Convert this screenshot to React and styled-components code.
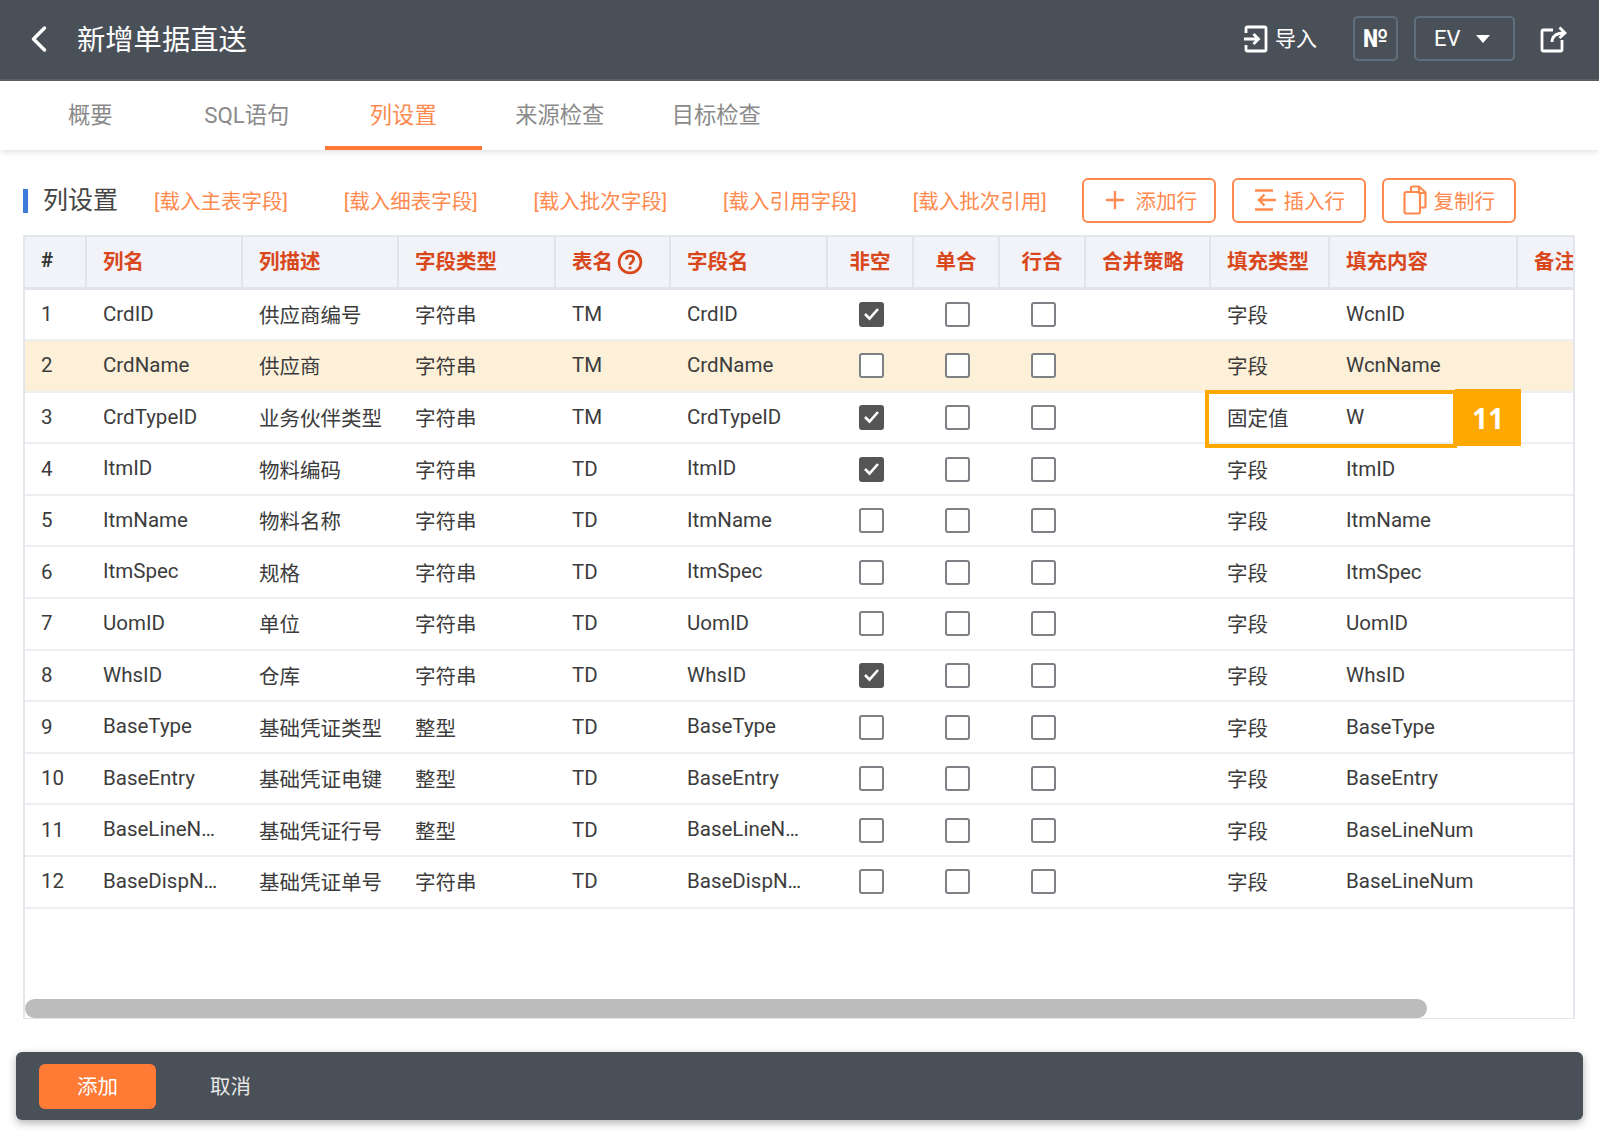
import styled, { createGlobalStyle } from 'styled-components'
import { ChevronLeft, Plus } from 'lucide-react'

const COLS = '62px 156px 156px 157px 115px 157px 86px 86px 86px 125px 119px 188px 120px'

const rows = [
  { id: 'CrdID', desc: '供应商编号', type: '字符串', table: 'TM', field: 'CrdID', notNull: true, fill: '字段', content: 'WcnID' },
  { id: 'CrdName', desc: '供应商', type: '字符串', table: 'TM', field: 'CrdName', fill: '字段', content: 'WcnName', active: true },
  { id: 'CrdTypeID', desc: '业务伙伴类型', type: '字符串', table: 'TM', field: 'CrdTypeID', notNull: true, fill: '固定值', content: 'W' },
  { id: 'ItmID', desc: '物料编码', type: '字符串', table: 'TD', field: 'ItmID', notNull: true, fill: '字段', content: 'ItmID' },
  { id: 'ItmName', desc: '物料名称', type: '字符串', table: 'TD', field: 'ItmName', fill: '字段', content: 'ItmName' },
  { id: 'ItmSpec', desc: '规格', type: '字符串', table: 'TD', field: 'ItmSpec', fill: '字段', content: 'ItmSpec' },
  { id: 'UomID', desc: '单位', type: '字符串', table: 'TD', field: 'UomID', fill: '字段', content: 'UomID' },
  { id: 'WhsID', desc: '仓库', type: '字符串', table: 'TD', field: 'WhsID', notNull: true, fill: '字段', content: 'WhsID' },
  { id: 'BaseType', desc: '基础凭证类型', type: '整型', table: 'TD', field: 'BaseType', fill: '字段', content: 'BaseType' },
  { id: 'BaseEntry', desc: '基础凭证电键', type: '整型', table: 'TD', field: 'BaseEntry', fill: '字段', content: 'BaseEntry' },
  { id: 'BaseLineNum', desc: '基础凭证行号', type: '整型', table: 'TD', field: 'BaseLineNum', fill: '字段', content: 'BaseLineNum' },
  { id: 'BaseDispNum', desc: '基础凭证单号', type: '字符串', table: 'TD', field: 'BaseDispNum', fill: '字段', content: 'BaseLineNum' },
]

const tabs = ['概要', 'SQL语句', '列设置', '来源检查', '目标检查']
const loaders = ['[载入主表字段]', '[载入细表字段]', '[载入批次字段]', '[载入引用字段]', '[载入批次引用]']

function ImportIcon() {
  return (
    <svg width="25" height="28" viewBox="0 0 25 28" fill="none" stroke="#fff" strokeWidth="2.8">
      <path d="M3 8V3.5A1.5 1.5 0 0 1 4.5 2h17A1.5 1.5 0 0 1 23 3.5v21a1.5 1.5 0 0 1-1.5 1.5h-17A1.5 1.5 0 0 1 3 24.5V20" />
      <path d="M1 14h14M10.5 9l5 5-5 5" />
    </svg>
  )
}

function ExportIcon() {
  return (
    <svg width="27" height="28" viewBox="0 0 27 28" fill="none" stroke="#fff" strokeWidth="2.8">
      <path d="M13 5H3.5A1.5 1.5 0 0 0 2 6.5v18A1.5 1.5 0 0 0 3.5 26h17a1.5 1.5 0 0 0 1.5-1.5V15" />
      <path d="M12 17c0-6 4-9 12-9M19.5 2.5 25 8l-5.5 5" />
    </svg>
  )
}

function InsertIcon() {
  return (
    <svg width="24" height="24" viewBox="0 0 24 24" fill="none" stroke="#ff8a50" strokeWidth="2.4">
      <path d="M2 2.5h18M2 21.5h18M23 12H6M11.5 6.5 6 12l5.5 5.5" />
    </svg>
  )
}

function CopyIcon() {
  return (
    <svg width="24" height="30" viewBox="0 0 24 30" fill="none" stroke="#ff8a50" strokeWidth="2.2">
      <path d="M8 6V3a1.5 1.5 0 0 1 1.5-1.5H16l6.5 6V21a1.5 1.5 0 0 1-1.5 1.5h-4" />
      <rect x="1.5" y="7" width="15.5" height="21.5" rx="2" />
      <path d="M16 1.5V8h6.5" />
    </svg>
  )
}

function HelpIcon() {
  return (
    <HelpMark width="26" height="26" viewBox="0 0 25 25" fill="none" stroke="#d9481c" strokeWidth="2.6">
      <circle cx="12.5" cy="12.5" r="10.5" />
      <path d="M9 10c0-2.2 1.5-3.5 3.5-3.5S16 7.8 16 9.8c0 2.7-3.5 2.9-3.5 5.7" />
      <path d="M12.5 17v2.5" />
    </HelpMark>
  )
}

function Tick() {
  return (
    <svg width="17" height="14" viewBox="0 0 17 14" fill="none" stroke="#fff" strokeWidth="2.6">
      <path d="M2 7l4.5 4.5L15 2" />
    </svg>
  )
}

export default function App() {
  return (
    <Page>
      <GlobalStyle />
      <TopBar>
        <BackButton><ChevronLeft size={44} strokeWidth={1.9} /></BackButton>
        <PageTitle>新增单据直送</PageTitle>
        <TopActions>
          <ImportAction><ImportIcon /><ImportLabel>导入</ImportLabel></ImportAction>
          <NumberBox>№</NumberBox>
          <LangBox>EV<Caret /></LangBox>
          <ExportAction><ExportIcon /></ExportAction>
        </TopActions>
      </TopBar>

      <Tabs>
        {tabs.map((tab) => (
          <Tab key={tab} $active={tab === '列设置'}>{tab}</Tab>
        ))}
      </Tabs>

      <Section>
        <Toolbar>
          <SectionTitle>列设置</SectionTitle>
          <Loaders>
            {loaders.map((item) => <LoadLink key={item}>{item}</LoadLink>)}
          </Loaders>
          <OutlineButton><Plus size={28} strokeWidth={2} />添加行</OutlineButton>
          <OutlineButton><InsertIcon />插入行</OutlineButton>
          <OutlineButton><CopyIcon />复制行</OutlineButton>
        </Toolbar>

        <TableWrap>
          <HeadRow>
            <HeadCell $dark>#</HeadCell>
            <HeadCell>列名</HeadCell>
            <HeadCell>列描述</HeadCell>
            <HeadCell>字段类型</HeadCell>
            <HeadCell>表名<HelpIcon /></HeadCell>
            <HeadCell>字段名</HeadCell>
            <HeadCell $center>非空</HeadCell>
            <HeadCell $center>单合</HeadCell>
            <HeadCell $center>行合</HeadCell>
            <HeadCell>合并策略</HeadCell>
            <HeadCell>填充类型</HeadCell>
            <HeadCell>填充内容</HeadCell>
            <HeadCell>备注</HeadCell>
          </HeadRow>

          <Body>
            {rows.map((row, i) => (
              <Row key={row.id} $active={row.active}>
                <Cell>{i + 1}</Cell>
                <Cell $clip>{row.id}</Cell>
                <Cell>{row.desc}</Cell>
                <Cell>{row.type}</Cell>
                <Cell>{row.table}</Cell>
                <Cell $clip>{row.field}</Cell>
                <CheckCell><Check $on={row.notNull}>{row.notNull && <Tick />}</Check></CheckCell>
                <CheckCell><Check /></CheckCell>
                <CheckCell><Check /></CheckCell>
                <Cell />
                <Cell>{row.fill}</Cell>
                <Cell>{row.content}</Cell>
                <Cell />
              </Row>
            ))}
          </Body>

          <ScrollTrack><ScrollThumb /></ScrollTrack>

          <Callout>
            <CalloutBadge>11</CalloutBadge>
          </Callout>
        </TableWrap>
      </Section>

      <Footer>
        <PrimaryButton>添加</PrimaryButton>
        <CancelButton>取消</CancelButton>
      </Footer>
    </Page>
  )
}

const GlobalStyle = createGlobalStyle`
  html, body {
    margin: 0;
    background: #fff;
  }
  * {
    box-sizing: border-box;
  }
`

const Page = styled.div`
  width: 1599px;
  height: 1136px;
  overflow: hidden;
  display: flex;
  flex-direction: column;
  font-family: Roboto, "Noto Sans CJK SC", sans-serif;
  font-size: 20.5px;
  color: #333;
`

const TopBar = styled.header`
  height: 81px;
  flex: none;
  display: flex;
  align-items: center;
  padding: 0 32px 2px 17px;
  background: #4a5058;
  border-bottom: 2px solid #5c6167;
  color: #fff;
`

const BackButton = styled.div`
  display: flex;
  color: #fff;
`

const PageTitle = styled.h1`
  margin: 0 0 0 16px;
  padding-bottom: 3px;
  font-size: 28.3px;
  font-weight: 400;
`

const TopActions = styled.div`
  margin-left: auto;
  display: flex;
  align-items: center;
`

const ImportAction = styled.div`
  display: flex;
  align-items: center;
  gap: 7px;
  margin-right: 36px;
`

const ImportLabel = styled.span`
  padding-bottom: 4px;
  font-size: 21px;
`

const NumberBox = styled.div`
  width: 45px;
  height: 45px;
  display: flex;
  align-items: center;
  justify-content: center;
  border: 2px solid #5f6f7d;
  border-radius: 5px;
  font-size: 25px;
  font-weight: 700;
`

const LangBox = styled.div`
  width: 101px;
  height: 45px;
  margin-left: 16px;
  padding-left: 18px;
  display: flex;
  align-items: center;
  gap: 15px;
  border: 2px solid #5f6f7d;
  border-radius: 5px;
  font-size: 22px;
`

const Caret = styled.span`
  width: 0;
  height: 0;
  border-left: 7px solid transparent;
  border-right: 7px solid transparent;
  border-top: 8px solid #fff;
`

const ExportAction = styled.div`
  display: flex;
  margin-left: 25px;
`

const Tabs = styled.nav`
  height: 69px;
  flex: none;
  display: flex;
  padding-left: 12px;
  box-shadow: 0 2px 6px rgba(0, 0, 0, 0.12);
`

const Tab = styled.div`
  width: 156.5px;
  display: flex;
  align-items: center;
  justify-content: center;
  padding-bottom: 2px;
  font-size: 22.3px;
  color: ${(p) => (p.$active ? '#ff8a50' : '#8a8a8a')};
  border-bottom: 4px solid ${(p) => (p.$active ? '#ff7a35' : 'transparent')};
`

const Section = styled.section`
  padding: 28px 24px 0 23px;
`

const Toolbar = styled.div`
  height: 45px;
  display: flex;
  align-items: center;
  gap: 16px;
`

const SectionTitle = styled.h2`
  margin: 0 20px 0 0;
  height: 24px;
  padding: 0 0 5px 15px;
  display: flex;
  align-items: center;
  border-left: 5px solid #3b7dd8;
  font-size: 25px;
  font-weight: 400;
  color: #444;
`

const Loaders = styled.div`
  display: flex;
  gap: 55.7px;
  margin-right: 19px;
`

const LoadLink = styled.a`
  width: 134px;
  padding-bottom: 2px;
  white-space: nowrap;
  font-size: 20.5px;
  color: #ff8a50;
`

const OutlineButton = styled.button`
  width: 134px;
  height: 45px;
  padding: 0 0 2px;
  display: flex;
  align-items: center;
  justify-content: center;
  gap: 7px;
  background: #fff;
  border: 2px solid #ff8a50;
  border-radius: 6px;
  font-family: inherit;
  font-size: 20.5px;
  color: #ff8a50;
`

const TableWrap = styled.div`
  position: relative;
  height: 784px;
  margin-top: 12px;
  display: flex;
  flex-direction: column;
  overflow: hidden;
  border: 2px solid #e4e6ee;
  border-bottom-width: 1px;
`

const HeadRow = styled.div`
  flex: none;
  height: 52.5px;
  width: max-content;
  display: grid;
  grid-template-columns: ${COLS};
  background: #f1f3f8;
  border-bottom: 3px solid #e2e4ec;
`

const HeadCell = styled.div`
  display: flex;
  align-items: center;
  justify-content: ${(p) => (p.$center ? 'center' : 'flex-start')};
  gap: 4px;
  padding-left: ${(p) => (p.$center ? 0 : '16px')};
  padding-bottom: 3px;
  white-space: nowrap;
  font-weight: 700;
  color: ${(p) => (p.$dark ? '#333' : '#d9481c')};
  border-right: 2px solid #e2e4ec;
`

const HelpMark = styled.svg`
  margin-top: 3px;
`

const Body = styled.div`
  flex: 1;
`

const Row = styled.div`
  height: 51.6px;
  width: max-content;
  display: grid;
  grid-template-columns: ${COLS};
  background: ${(p) => (p.$active ? '#fdf0d9' : '#fff')};
  border-bottom: 2px solid #eceef2;
`

const Cell = styled.div`
  min-width: 0;
  display: flex;
  align-items: center;
  padding: 0 ${(p) => (p.$clip ? '20px' : '0')} 0 16px;
  padding-bottom: 1px;
  white-space: nowrap;
  color: #3c3c3c;

  ${(p) => p.$clip && `
    display: block;
    line-height: 49.6px;
    overflow: hidden;
    text-overflow: ellipsis;
  `}
`

const CheckCell = styled.div`
  display: flex;
  align-items: center;
  justify-content: center;
`

const Check = styled.span`
  width: 25px;
  height: 25px;
  display: flex;
  align-items: center;
  justify-content: center;
  border-radius: 3px;
  border: 2px solid ${(p) => (p.$on ? '#555' : '#7d8084')};
  background: ${(p) => (p.$on ? '#555' : '#fff')};
`

const ScrollTrack = styled.div`
  flex: none;
  height: 19px;
`

const ScrollThumb = styled.div`
  width: 1402px;
  height: 100%;
  border-radius: 10px;
  background: #bcbcbc;
`

const Callout = styled.div`
  position: absolute;
  left: 1180px;
  top: 153px;
  width: 252px;
  height: 58px;
  border: 4px solid #ffa800;
`

const CalloutBadge = styled.div`
  position: absolute;
  left: calc(100% + 2px);
  top: -5px;
  width: 66px;
  height: 57px;
  display: flex;
  align-items: center;
  justify-content: center;
  background: #ffa800;
  font-family: "Open Sans", sans-serif;
  font-size: 28px;
  font-weight: 700;
  color: #fff;
`

const Footer = styled.footer`
  flex: none;
  height: 68px;
  margin: 33px 16px 0;
  padding-left: 23px;
  display: flex;
  align-items: center;
  background: #4a5058;
  border-radius: 6px;
  box-shadow: 0 3px 8px rgba(0, 0, 0, 0.3);
`

const PrimaryButton = styled.button`
  width: 117px;
  height: 45px;
  padding: 0 0 2px;
  border: none;
  border-radius: 6px;
  background: #ff7a35;
  font-family: inherit;
  font-size: 20.5px;
  color: #fff;
`

const CancelButton = styled.button`
  margin-left: 54px;
  padding: 0 0 2px;
  border: none;
  background: none;
  font-family: inherit;
  font-size: 20.5px;
  color: #e8e8e8;
`
